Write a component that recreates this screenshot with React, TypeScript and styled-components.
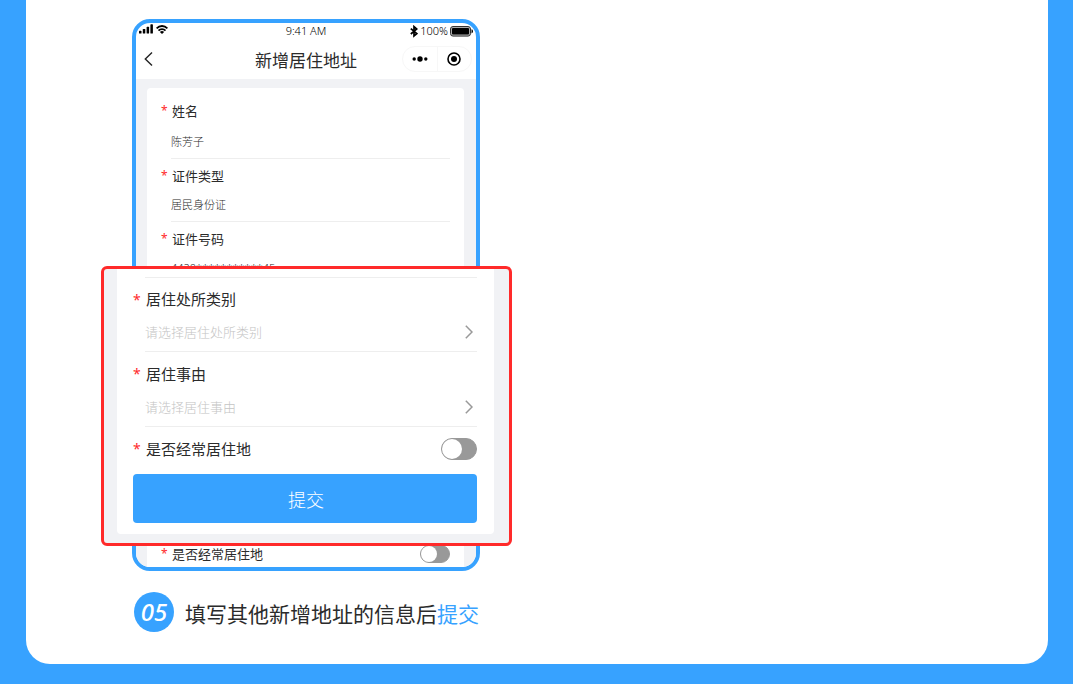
import React from 'react';
import styled, { createGlobalStyle } from 'styled-components';

const blue = '#37a2ff';
const ink = '#2b2b2b';
const grey = '#f1f2f5';
const red = '#ff2a2a';
const line = '#eeeeee';

const GlobalStyle = createGlobalStyle`
  *, *::before, *::after { box-sizing: border-box; }
  body {
    margin: 0;
    background: ${blue};
    color: ${ink};
    font-family: "Noto Sans", "Noto Sans CJK SC", sans-serif;
  }
  button, input, select { font-family: inherit; }
`;

const Page = styled.main`
  padding: 0 25px 20px 26px;
`;

const Sheet = styled.section`
  padding: 19px 32px 32px 106px;
  background: #fff;
  border-radius: 0 0 24px 24px;
`;

const Step = styled.figure`
  position: relative;
  width: 348px;
  max-width: 100%;
  margin: 0;
`;

const Phone = styled.div`
  display: flex;
  flex-direction: column;
  height: 552px;
  overflow: hidden;
  background: #fff;
  border: 4px solid ${blue};
  border-radius: 18px;
`;

const StatusBar = styled.div`
  display: grid;
  grid-template-columns: 1fr auto 1fr;
  align-items: center;
  height: 16px;
  padding: 0 3px;
  font-size: 11px;
  line-height: 16px;
  font-weight: 300;
  color: #000;
`;

const Signals = styled.div`
  display: flex;
  gap: 3px;
  align-items: center;
  align-self: start;
  height: 12px;
`;

const Battery = styled.div`
  display: flex;
  gap: 2px;
  align-items: center;
  justify-content: flex-end;
`;

const NavBar = styled.header`
  display: grid;
  grid-template-columns: 1fr auto 1fr;
  align-items: center;
  height: 40px;
  padding: 0 4px;
`;

const Title = styled.h1`
  margin: 0;
  padding-top: 4px;
  font-size: 17px;
  line-height: 24px;
  font-weight: 400;
`;

const IconButton = styled.button`
  display: flex;
  align-items: center;
  justify-content: center;
  padding: 0;
  border: 0;
  background: none;
  cursor: pointer;
`;

const BackButton = styled(IconButton)`
  justify-self: start;
  padding: 0 2px;
`;

const Capsule = styled.div`
  display: flex;
  justify-self: end;
  width: 70px;
  height: 26px;
  border: 1px solid #f7f7f7;
  border-radius: 13px;

  ${IconButton} { flex: 1; }
  ${IconButton} + ${IconButton} { border-left: 1px solid #f7f7f7; }
`;

const Body = styled.div`
  display: flex;
  flex: 1;
  padding: 9px 12px 0 11px;
  background: ${grey};
`;

const Card = styled.div`
  display: flex;
  flex: 1;
  flex-direction: column;
  justify-content: space-between;
  padding: 4px 14px 0;
  background: #fff;
  border-radius: 4px 4px 0 0;
`;

const Label = styled.label<{ $large?: boolean }>`
  display: flex;
  gap: ${p => (p.$large ? 6 : 5)}px;
  margin-left: ${p => (p.$large ? -12 : -10)}px;
  font-size: ${p => (p.$large ? 15 : 13)}px;
  line-height: ${p => (p.$large ? 44 : 34)}px;

  &::before {
    content: "*";
    width: ${p => (p.$large ? 7 : 6)}px;
    color: ${red};
    font-size: ${p => (p.$large ? 14 : 12)}px;
  }
`;

const Field = styled.div<{ $large?: boolean }>`
  display: flex;
  flex-direction: column;
  margin-left: ${p => (p.$large ? 12 : 10)}px;
  border-bottom: 1px solid ${line};

  ${Card} &:first-child ${Label} { line-height: 38px; }
`;

const Value = styled.input`
  width: 100%;
  height: 28px;
  padding: 0 0 6px;
  border: 0;
  outline: 0;
  background: none;
  color: ${ink};
  font-size: 11px;
  font-weight: 300;
`;

const Picker = styled.div`
  display: grid;
  align-items: center;
  height: 30px;
  padding: 0 4px 8px 0;

  > * { grid-area: 1 / 1; }
  > svg { justify-self: end; pointer-events: none; }
`;

const Select = styled.select`
  width: 100%;
  height: 22px;
  padding: 0;
  border: 0;
  outline: 0;
  appearance: none;
  background: none;
  color: #c4c4c4;
  font-size: 13px;
  font-weight: 300;
`;

const SwitchRow = styled.div<{ $large?: boolean }>`
  display: flex;
  align-items: center;
  justify-content: space-between;
  height: ${p => (p.$large ? 44 : 26)}px;

  ${Label} { margin-left: 0; }
`;

const Switch = styled.input<{ $large?: boolean }>`
  width: ${p => (p.$large ? 36 : 30)}px;
  height: ${p => (p.$large ? 22 : 18)}px;
  margin: 0;
  appearance: none;
  background: #999;
  border: 1px solid #999;
  border-radius: 11px;
  cursor: pointer;

  &::before {
    content: "";
    display: block;
    height: 100%;
    aspect-ratio: 1;
    background: #fff;
    border-radius: 50%;
  }
  &:checked { background: ${blue}; }
  &:checked::before { margin-left: auto; }
`;

const Closeup = styled.form`
  position: absolute;
  top: 247px;
  left: -31px;
  right: -32px;
  padding: 0 15px 9px 13px;
  background: ${grey};
  border: 3px solid ${red};
  border-radius: 6px;
`;

const CloseupCard = styled.div`
  padding: 8px 17px 11px 16px;
  background: #fff;
  border-radius: 0 0 4px 4px;

  &::before {
    content: "";
    display: block;
    margin-left: 12px;
    border-top: 1px solid ${line};
  }

  ${Field}:first-child ${Label} { line-height: 43px; }
`;

const Submit = styled.button`
  display: block;
  width: 100%;
  height: 49px;
  margin-top: 3px;
  padding: 0 0 0 2px;
  border: 0;
  border-radius: 4px;
  background: ${blue};
  color: #fff;
  font-size: 18px;
  font-weight: 300;
  cursor: pointer;
`;

const Caption = styled.figcaption`
  display: flex;
  gap: 11px;
  align-items: center;
  margin: 21px 0 0 2px;
  font-size: 21px;
  line-height: 40px;
  white-space: nowrap;

  em { color: ${blue}; font-style: normal; }
`;

const CaptionText = styled.span`
  padding-top: 4px;
  line-height: 36px;
`;

const Badge = styled.span`
  flex: none;
  width: 40px;
  height: 40px;
  border-radius: 50%;
  background: ${blue};
  color: #fff;
  font-size: 24px;
  font-style: italic;
  font-weight: 500;
  text-align: center;
`;

const Chevron = () => (
  <svg width="8" height="14" viewBox="0 0 8 14" fill="none" stroke="#999" strokeWidth="1.5" aria-hidden>
    <path d="M0.8 0.8 7 7 0.8 13.2" />
  </svg>
);

function TextField({ id, label, value }: { id: string; label: string; value: string }) {
  return (
    <Field>
      <Label htmlFor={id}>{label}</Label>
      <Value id={id} defaultValue={value} />
    </Field>
  );
}

function SelectField({ id, label, prompt }: { id: string; label: string; prompt: string }) {
  return (
    <Field $large>
      <Label $large htmlFor={id}>{label}</Label>
      <Picker>
        <Select id={id}><option>{prompt}</option></Select>
        <Chevron />
      </Picker>
    </Field>
  );
}

function SwitchField({ id, label, large }: { id: string; label: string; large?: boolean }) {
  return (
    <SwitchRow $large={large}>
      <Label $large={large} htmlFor={id}>{label}</Label>
      <Switch $large={large} id={id} type="checkbox" role="switch" />
    </SwitchRow>
  );
}

export default function App() {
  return (
    <Page>
      <GlobalStyle />
      <Sheet>
        <Step>
          <Phone>
            <StatusBar>
              <Signals>
                <svg width="14" height="10" viewBox="0 0 14 10" fill="#000" aria-hidden>
                  <rect x="0" y="6.8" width="2.5" height="2.7" rx=".6" />
                  <rect x="3.8" y="5" width="2.5" height="4.5" rx=".6" />
                  <rect x="7.6" y="2.8" width="2.5" height="6.7" rx=".6" />
                  <rect x="11.4" y="0.3" width="2.5" height="9.2" rx=".6" />
                </svg>
                <svg width="12" height="9" viewBox="0 0 12 9" fill="none" stroke="#000" strokeWidth="1.8" aria-hidden>
                  <path d="M.6 3.3C3.6.2 8.4.2 11.4 3.3M2.5 5.6c1.9-1.9 5.1-1.9 7 0" />
                  <path d="M6 9 3.9 6.9c1.2-1.1 3-1.1 4.2 0z" fill="#000" stroke="none" />
                </svg>
              </Signals>
              <span>9:41 AM</span>
              <Battery>
                <svg width="8" height="13" viewBox="0 0 8 13" fill="none" stroke="#000" strokeWidth="1.7" aria-hidden>
                  <path d="M.8 3.6 6.8 8.6 4 11V1.6L6.8 4 .8 9" />
                </svg>
                <span>100%</span>
                <svg width="23" height="11" viewBox="0 0 23 11" aria-hidden>
                  <rect x=".5" y=".5" width="20" height="9.6" rx="2.5" fill="#aaa" stroke="#333" />
                  <rect x="2" y="2" width="17" height="6.6" rx="1" fill="#000" />
                  <path d="M21.5 3.2c2 .7 2 3.5 0 4.2z" fill="#000" />
                </svg>
              </Battery>
            </StatusBar>
            <NavBar>
              <BackButton type="button" aria-label="返回">
                <svg width="12" height="16" viewBox="0 0 12 16" fill="none" stroke="#222" strokeWidth="1.4" aria-hidden>
                  <path d="M10 1.5 3.3 8 10 14.5" />
                </svg>
              </BackButton>
              <Title>新增居住地址</Title>
              <Capsule>
                <IconButton type="button" aria-label="更多">
                  <svg width="16" height="6" viewBox="0 0 16 6" fill="#000" aria-hidden>
                    <circle cx="2.2" cy="3" r="1.7" />
                    <circle cx="8" cy="3" r="2.7" />
                    <circle cx="13.8" cy="3" r="1.7" />
                  </svg>
                </IconButton>
                <IconButton type="button" aria-label="关闭">
                  <svg width="14" height="14" viewBox="0 0 14 14" aria-hidden>
                    <circle cx="7" cy="7" r="6" fill="none" stroke="#000" strokeWidth="1.6" />
                    <circle cx="7" cy="7" r="3" fill="#000" />
                  </svg>
                </IconButton>
              </Capsule>
            </NavBar>
            <Body>
              <Card>
                <div>
                  <TextField id="name" label="姓名" value="陈芳子" />
                  <TextField id="id-type" label="证件类型" value="居民身份证" />
                  <TextField id="id-number" label="证件号码" value="4420***********45" />
                </div>
                <SwitchField id="usual-home" label="是否经常居住地" />
              </Card>
            </Body>
          </Phone>
          <Closeup onSubmit={e => e.preventDefault()}>
            <CloseupCard>
              <SelectField id="place-kind" label="居住处所类别" prompt="请选择居住处所类别" />
              <SelectField id="reason" label="居住事由" prompt="请选择居住事由" />
              <SwitchField id="usual-home-large" label="是否经常居住地" large />
              <Submit type="submit">提交</Submit>
            </CloseupCard>
          </Closeup>
          <Caption>
            <Badge>05</Badge>
            <CaptionText>填写其他新增地址的信息后<em>提交</em></CaptionText>
          </Caption>
        </Step>
      </Sheet>
    </Page>
  );
}
